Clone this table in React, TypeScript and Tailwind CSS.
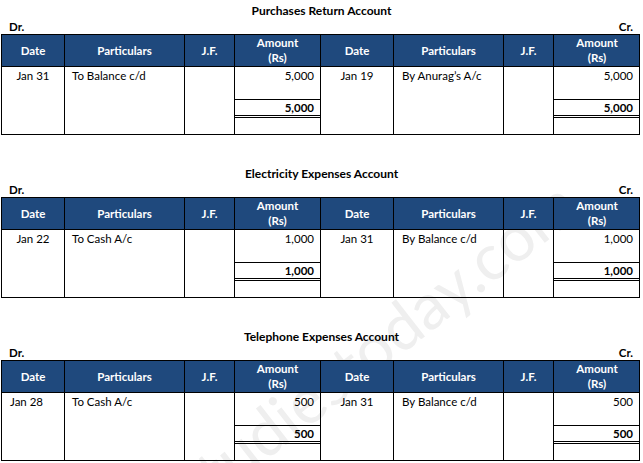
const COLS = "grid grid-cols-[63px_120px_50px_86px_73px_110px_50px_86px]";

type Side = {
  date: string;
  dateAlign: "center" | "left";
  particulars: string;
  amount: string;
};

type Account = {
  title: string;
  dr: Side;
  cr: Side;
};

const ACCOUNTS: Account[] = [
  {
    title: "Purchases Return Account",
    dr: { date: "Jan 31", dateAlign: "center", particulars: "To Balance c/d", amount: "5,000" },
    cr: { date: "Jan 19", dateAlign: "center", particulars: "By Anurag’s A/c", amount: "5,000" },
  },
  {
    title: "Electricity Expenses Account",
    dr: { date: "Jan 22", dateAlign: "center", particulars: "To Cash A/c", amount: "1,000" },
    cr: { date: "Jan 31", dateAlign: "center", particulars: "By Balance c/d", amount: "1,000" },
  },
  {
    title: "Telephone Expenses Account",
    dr: { date: "Jan 28", dateAlign: "left", particulars: "To Cash A/c", amount: "500" },
    cr: { date: "Jan 31", dateAlign: "center", particulars: "By Balance c/d", amount: "500" },
  },
];

function HeaderCells({ last }: { last: boolean }) {
  const cell = "flex items-center justify-center text-center border-black";
  return (
    <>
      <div className={`${cell} border-r`}>Date</div>
      <div className={`${cell} border-r`}>Particulars</div>
      <div className={`${cell} border-r`}>J.F.</div>
      <div className={`${cell} flex-col leading-[15px] pb-[1px] ${last ? "" : "border-r"}`}>
        <span>Amount</span>
        <span>(Rs)</span>
      </div>
    </>
  );
}

function BodyCells({ side, last }: { side: Side; last: boolean }) {
  return (
    <>
      <div
        className={`border-r border-black pt-[1px] leading-[15px] ${
          side.dateAlign === "center" ? "text-center" : "pl-[8px]"
        }`}
      >
        {side.date}
      </div>
      <div className={`border-r border-black pt-[1px] leading-[15px] ${last ? "pl-[8px]" : "pl-[7px]"}`}>
        {side.particulars}
      </div>
      <div className="border-r border-black" />
      <div className={`flex flex-col ${last ? "" : "border-r border-black"}`}>
        <div className={`h-[32px] pt-[1px] leading-[15px] text-right ${last ? "pr-[7px]" : "pr-[6px]"}`}>
          {side.amount}
        </div>
        <div
          className={`h-[16px] border-t border-black leading-[15px] text-right font-bold ${
            last ? "pr-[7px]" : "pr-[6px]"
          }`}
        >
          {side.amount}
        </div>
        <div className="flex-1 border-t-[3px] border-double border-black" />
      </div>
    </>
  );
}

function Ledger({ account }: { account: Account }) {
  return (
    <section className="h-[163px] pt-[3px]">
      <div className="h-[16px] leading-[16px] text-center font-bold text-[12px]">{account.title}</div>
      <div className="h-[15px] leading-[15px] flex justify-between pl-[9px] pr-[10px] font-bold text-[11.5px]">
        <span>Dr.</span>
        <span>Cr.</span>
      </div>
      <div className="ml-[1px] w-[639px] border border-black">
        <div className={`${COLS} h-[32px] bg-[#1f497d] text-white font-bold border-b border-black`}>
          <HeaderCells last={false} />
          <HeaderCells last={true} />
        </div>
        <div className={`${COLS} h-[67px]`}>
          <BodyCells side={account.dr} last={false} />
          <BodyCells side={account.cr} last={true} />
        </div>
      </div>
    </section>
  );
}

export default function App() {
  return (
    <div
      className="relative w-[643px] h-[463px] overflow-hidden bg-white text-black text-[11.5px]"
      style={{ fontFamily: "Lato, 'Open Sans', sans-serif" }}
    >
      {/* watermark sits behind the ledgers */}
      <div
        aria-hidden="true"
        className="absolute left-[375px] top-[345px] -translate-x-1/2 -translate-y-1/2 -rotate-[38deg] whitespace-nowrap text-[64px] leading-none text-[#efefef] select-none pointer-events-none"
      >
        studiestoday.com
      </div>
      <div className="relative">
        {ACCOUNTS.map((a) => (
          <Ledger key={a.title} account={a} />
        ))}
      </div>
    </div>
  );
}
